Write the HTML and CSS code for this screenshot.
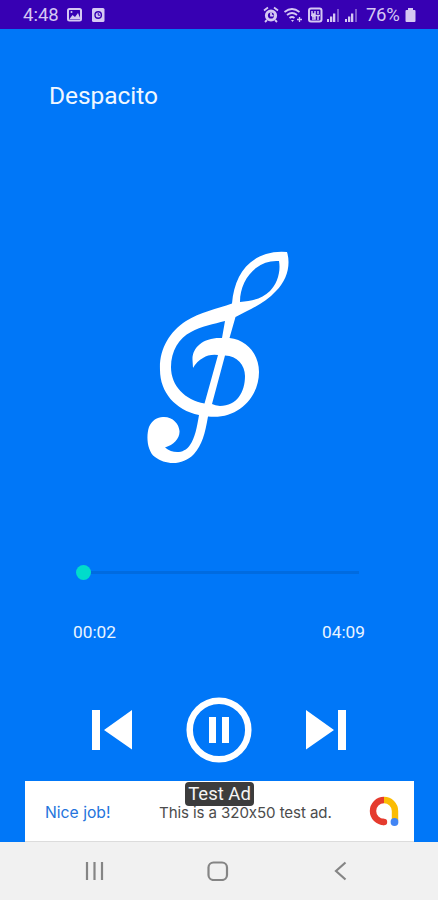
FILE: index.html
```html
<!DOCTYPE html>
<html lang="en">
<head>
<meta charset="utf-8">
<title>Music player</title>
<link rel="stylesheet" href="styles.css">
</head>
<body>
<div class="screen">
  <header class="status">
    <span class="clock">4:48</span>
    <svg class="notices" width="40" height="16" viewBox="0 0 40 16">
      <rect x="1" y="2" width="13" height="11.5" rx="1.5" fill="none" stroke="currentColor" stroke-width="2"/>
      <path d="M2.5 12l3-4 2.5 2 3-4 2.5 6z" fill="currentColor"/><circle cx="4.5" cy="5" r="1" fill="currentColor"/>
      <rect x="25" y="1" width="12.500" height="14" rx="1.500" fill="currentColor"/>
      <circle cx="31.2" cy="8" r="3.200" fill="none" stroke="#3700b3" stroke-width="1.400"/>
      <path d="M31.200 6v2.200h2" fill="none" stroke="#3700b3"/>
    </svg>
    <svg class="signals" width="96" height="18" viewBox="0 0 96 18">
      <g fill="none" stroke="currentColor">
        <circle cx="8" cy="9.500" r="4.600" stroke-width="3"/>
        <path d="M8 6.500v3.200h2.500M1 4.500l4-3M15 4.500l-4-3M4 14l-2 2M12 14l2 2" stroke-width="1.800"/>
        <path d="M21.500 6q7.500-6 15 0M24 9q5-4 10 0M26.500 12q2.500-2 5 0" stroke-width="1.700"/>
        <path d="M36.500 11v5M34 13.500h5" stroke-width="1.300"/>
        <rect x="46" y="2.500" width="12.500" height="13" rx="2" stroke-width="2"/>
        <path d="M49 5v3h3V5M55 5v3M49 11h3v2h-3M55 10v4M48 9.500h9" stroke-width="1.500"/>
      </g>
      <path d="M28 14h3l-1.500 2zM64 13h2v3h-2zM67 10.500h2.300V16h-2.300zM70 7.500h2.300V16h-2.300zM82 13h2v3h-2zM85 10.500h2.300V16h-2.300zM88 7.500h2.300V16h-2.300z" fill="currentColor"/>
      <path d="M74 3h2v13h-2zM92 3h2v13h-2z" fill="currentColor" opacity=".45"/>
    </svg>
    <span class="percent">76%</span>
    <svg class="battery" width="11" height="16" viewBox="0 0 11 16"><path d="M3 1h5v2h1.500q1 0 1 1v10q0 1-1 1h-8q-1 0-1-1V4q0-1 1-1H3z" fill="currentColor"/></svg>
  </header>
  <main class="player">
    <h1 class="title">Despacito</h1>
    <svg class="clef" width="148" height="218" viewBox="145 248 148 218">
      <path fill="#fff" fill-rule="evenodd" d="M287 252C291 265 287 280 276 291C265 303 251 309 235.500 317L229.500 338C247 340 259 354 259 372C259 398 237 420 208 416.500C205 434 202 445 194 454C183 466 165 465 155 457C147 451 146 436 149 427C152 420 158 416.500 164 417C173 417 179 424 179.500 431C180 438 174 445 165 447.500C173 454 184 454 190 445C195 438 197 427 199 415C175 410 160 392 160 370C159 350 169 332 186 321C200 312 217 309 232 303.500C234 280 244 261 266 254Q276 251 287 252ZM240 302C240 288 246 276 256 268Q266 260 279 261C281 272 277 284 270 291C262 299 252 301 240 302ZM225 321L222 338C204 337 192 347 192.500 360L193 368Q197 361 203 358Q209 354 218 355L204.500 403.500C185 400 171 386 171 367C171 351 179 338 191 332C201 326 214 324 225 321ZM225 355.500C237 356 245 365 245 376C245 392 237 406 220 406Q215 405.500 212 404Z"/>
    </svg>
    <div class="seek"><span class="thumb"></span><span class="track"></span></div>
    <div class="times"><span>00:02</span><span>04:09</span></div>
    <div class="controls">
      <svg width="42" height="42" viewBox="0 0 42 42" fill="#fff"><path d="M1 1h8v40H1zM41 1v39.500L13 21z"/></svg>
      <svg width="66" height="66" viewBox="0 0 66 66"><circle cx="33" cy="33" r="29.300" fill="none" stroke="#fff" stroke-width="6.500"/><path fill="#fff" d="M23 20h7v26h-7zM36 20h7v26h-7z"/></svg>
      <svg width="42" height="42" viewBox="0 0 42 42" fill="#fff"><path d="M33 1h8v40h-8zM1 1v39.500L29 21z"/></svg>
    </div>
    <section class="ad">
      <span class="nice">Nice job!</span>
      <span class="copy">This is a 320x50 test ad.</span>
      <svg class="logo" width="32" height="32" viewBox="0 0 32 32" fill="none" stroke-width="6.400">
        <path d="M16 27a11 11 0 0 1 0-22" stroke="#e53b2e"/>
        <circle cx="16" cy="27" r="3.200" fill="#e53b2e"/>
        <path d="M16 5A11 11 0 0 1 27 16V26" stroke="#fbbc04"/>
        <circle cx="26.500" cy="27" r="3.900" fill="#4285f4"/>
      </svg>
      <span class="badge">Test Ad</span>
    </section>
  </main>
  <nav class="nav">
    <svg width="20" height="20" viewBox="0 0 20 20"><path d="M2 1v18M9.500 1v18M17 1v18"/></svg>
    <svg class="home" width="22" height="20" viewBox="0 0 22 20"><rect x="1.500" y="1.500" width="18.500" height="17.500" rx="5"/></svg>
    <svg width="14" height="20" viewBox="0 0 14 20"><path d="M11.500 1.500L2 10l9.500 8.500"/></svg>
  </nav>
</div>
</body>
</html>
```
FILE: styles.css
```css
* { box-sizing: border-box; }
body { margin: 0; font-family: Roboto, sans-serif; }
svg { display: block; flex: none; }
.screen { width: 438px; height: 900px; display: flex; flex-direction: column; background: #0077f8; overflow: hidden; }
.status { height: 29px; flex: none; display: flex; align-items: center; padding: 0 22px 0 23px; background: #3700b3; color: #d5c8f3; font-size: 18.5px; }
.clock { width: 36px; white-space: nowrap; }
.notices { margin-left: 8px; }
.signals { margin-left: auto; }
.percent { width: 34px; margin: 0 5px 0 7px; font-size: 18.5px; letter-spacing: -0.3px; white-space: nowrap; }
.player { height: 813px; flex: none; display: flex; flex-direction: column; color: #fff; }
.title { margin: 52px 0 0 49px; height: 30px; font-size: 24.5px; line-height: 30px; font-weight: 400; letter-spacing: -0.05px; color: #f0f7ff; }
.clef { margin: 137px 0 0 145px; }
.seek { height: 16px; margin: 98px 79px 0 76px; display: flex; align-items: center; }
.thumb { width: 15px; height: 15px; border-radius: 50%; background: #00dccb; }
.track { flex: 1; height: 3px; background: #006be0; }
.times { height: 20px; margin: 42px 73px 0; display: flex; justify-content: space-between; font-size: 17.3px; line-height: 20px; color: #e9f4ff; }
.controls { height: 66px; margin: 55px 91px 0; display: flex; justify-content: space-between; align-items: center; }
.ad { position: relative; height: 61px; margin: 18px 24px 0 25px; padding: 0 14px 0 20px; display: flex; align-items: center; background: #fff; border-bottom: 1px solid #dcdcdc; font-family: Inter, sans-serif; font-size: 15.7px; }
.nice { width: 114px; color: #2474dc; padding-top: 2px; }
.copy { color: #4c4c4c; font-size: 15.1px; letter-spacing: -0.1px; font-feature-settings: "calt" 0; white-space: nowrap; padding-top: 2px; }
.logo { margin-left: auto; }
.badge { position: absolute; left: 160px; top: 1px; width: 69px; height: 24px; border-radius: 4px; background: #3c3c3c; color: #f5f5f5; font: 18.5px/24px Roboto, sans-serif; text-align: center; }
.nav { height: 58px; flex: none; display: flex; justify-content: space-between; align-items: center; padding: 0 90px 0 85px; background: #f1f1f1; }
.nav svg { fill: none; stroke: #858585; stroke-width: 2.2; }
.nav .home { margin-right: 4px; }
```
